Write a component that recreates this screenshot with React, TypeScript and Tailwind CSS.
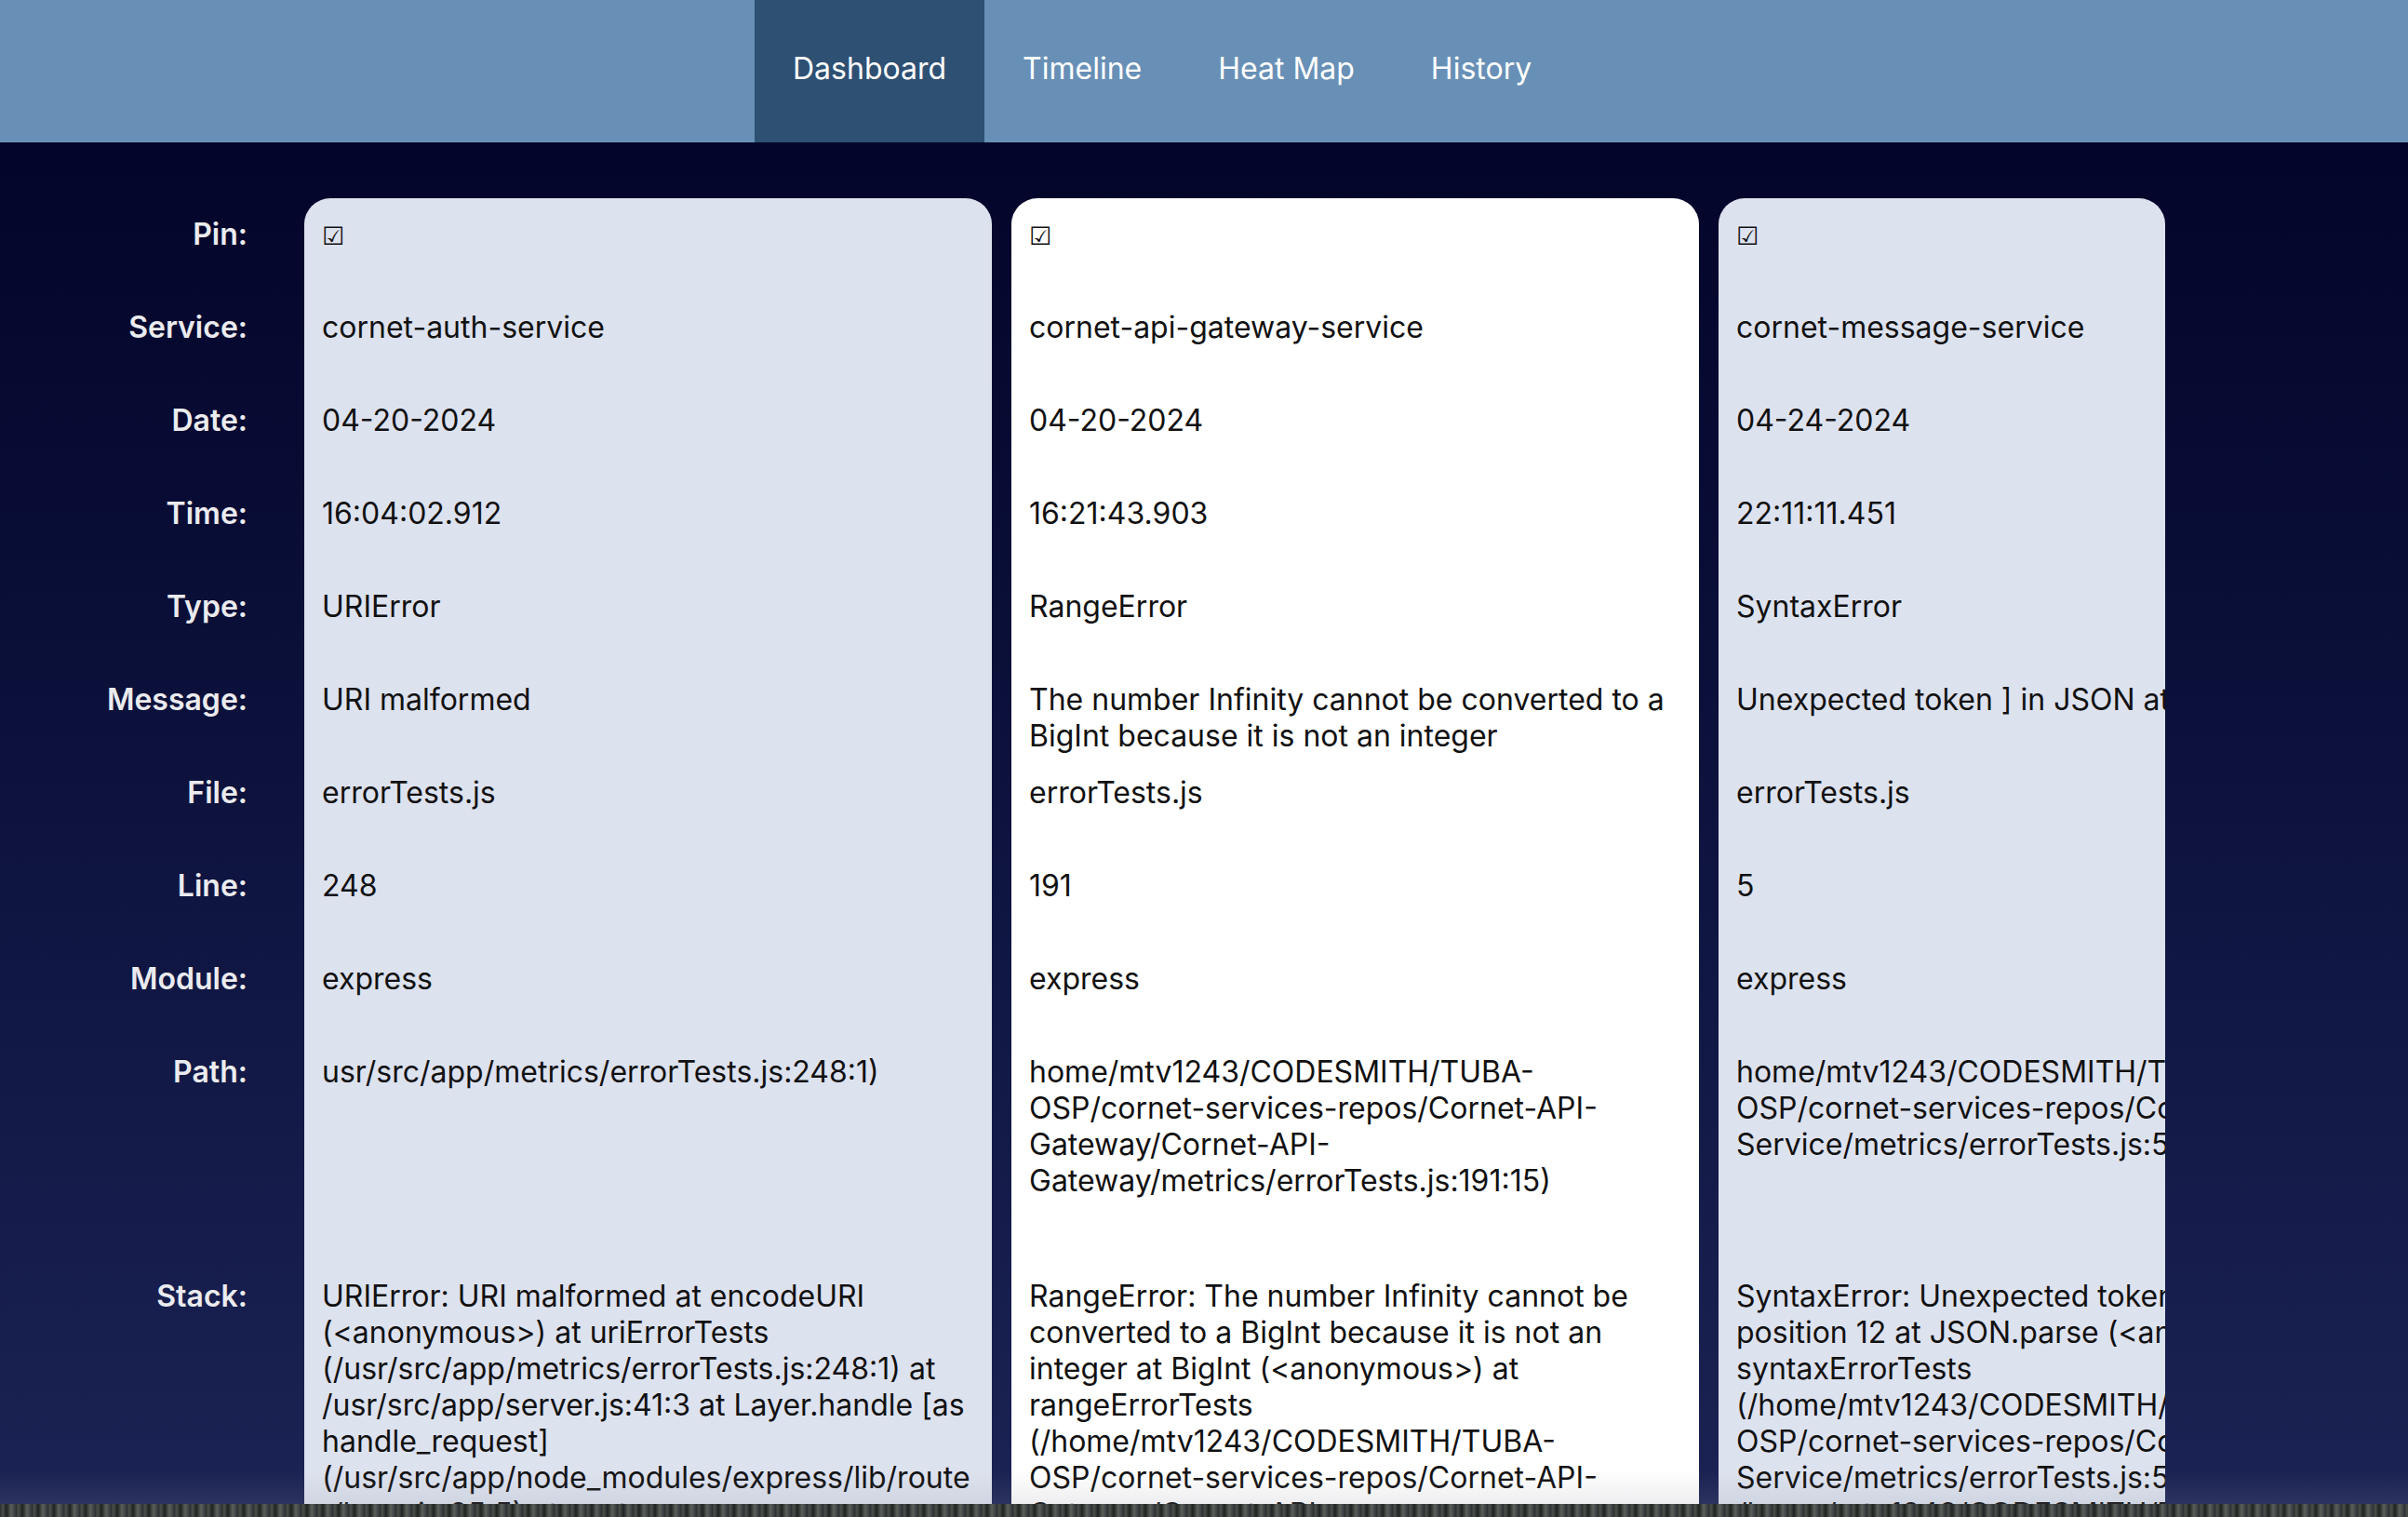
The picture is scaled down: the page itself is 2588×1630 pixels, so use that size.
import React from "react";

const tabs = ["Dashboard", "Timeline", "Heat Map", "History"];

const labels = [
  "Pin:",
  "Service:",
  "Date:",
  "Time:",
  "Type:",
  "Message:",
  "File:",
  "Line:",
  "Module:",
  "Path:",
  "Stack:",
];

type ErrorLog = {
  service: string;
  date: string;
  time: string;
  type: string;
  message: string;
  file: string;
  line: string;
  module: string;
  path: string;
  stack: string;
  highlight?: boolean;
  clipped?: boolean;
};

const logs: ErrorLog[] = [
  {
    service: "cornet-auth-service",
    date: "04-20-2024",
    time: "16:04:02.912",
    type: "URIError",
    message: "URI malformed",
    file: "errorTests.js",
    line: "248",
    module: "express",
    path: "usr/src/app/metrics/errorTests.js:248:1)",
    stack:
      "URIError: URI malformed at encodeURI (<anonymous>) at uriErrorTests (/usr/src/app/metrics/errorTests.js:248:1) at /usr/src/app/server.js:41:3 at Layer.handle [as handle_request] (/usr/src/app/node_modules/express/lib/router/layer.js:95:5) at next (/usr/src/app/node_modules/express/lib/router/route.js:149:13)",
  },
  {
    service: "cornet-api-gateway-service",
    date: "04-20-2024",
    time: "16:21:43.903",
    type: "RangeError",
    message: "The number Infinity cannot be converted to a BigInt because it is not an integer",
    file: "errorTests.js",
    line: "191",
    module: "express",
    path: "home/mtv1243/CODESMITH/TUBA-OSP/cornet-services-repos/Cornet-API-Gateway/Cornet-API-Gateway/metrics/errorTests.js:191:15)",
    stack:
      "RangeError: The number Infinity cannot be converted to a BigInt because it is not an integer at BigInt (<anonymous>) at rangeErrorTests (/home/mtv1243/CODESMITH/TUBA-OSP/cornet-services-repos/Cornet-API-Gateway/Cornet-API-Gateway/metrics/errorTests.js:191:15) at next",
    highlight: true,
  },
  {
    service: "cornet-message-service",
    date: "04-24-2024",
    time: "22:11:11.451",
    type: "SyntaxError",
    message: "Unexpected token ] in JSON at position 12",
    file: "errorTests.js",
    line: "5",
    module: "express",
    path: "home/mtv1243/CODESMITH/TUBA-OSP/cornet-services-repos/Cornet-Message-Service/metrics/errorTests.js:5:11)",
    stack:
      "SyntaxError: Unexpected token ] in JSON at position 12 at JSON.parse (<anonymous>) at syntaxErrorTests (/home/mtv1243/CODESMITH/TUBA-OSP/cornet-services-repos/Cornet-Message-Service/metrics/errorTests.js:5:11) at /home/mtv1243/CODESMITH/TUBA-OSP/cornet-services-repos/Cornet-Message-Service/server.js:30:3",
    clipped: true,
  },
];

function rowHeight(i: number) {
  if (i === 9) return "h-[241px]";
  if (i === 10) return "h-[400px]";
  return "h-[100px]";
}

function Card({ log }: { log: ErrorLog }) {
  const values = [
    log.service,
    log.date,
    log.time,
    log.type,
    log.message,
    log.file,
    log.line,
    log.module,
    log.path,
    log.stack,
  ];
  return (
    <div
      className={`shrink-0 overflow-hidden rounded-t-[28px] text-[#111111] ${
        log.clipped ? "w-[480px]" : "w-[739px]"
      } ${log.highlight ? "bg-white" : "bg-[#dde2ef]"}`}
    >
      <div className="w-[739px]">
        <div className="h-[100px] px-[19px] pt-[19px]">
          <span className="font-['DejaVu_Sans',sans-serif] text-[27px] leading-[39px]">☑</span>
        </div>
        {values.map((v, i) => (
          <div key={i} className={`${rowHeight(i + 1)} px-[19px] pt-[19px] break-words`}>
            {v}
          </div>
        ))}
      </div>
    </div>
  );
}

export default function App() {
  return (
    <div className="w-[2588px] h-[1630px] overflow-hidden flex flex-col font-['Inter',sans-serif] text-[32px] leading-[39px]">
      <header className="h-[153px] shrink-0 bg-[#6890b6] flex pl-[811px]">
        {tabs.map((t, i) => (
          <div
            key={t}
            className={`h-full flex items-center px-[41px] pb-[6px] text-white ${
              i === 0 ? "bg-[#2e5073]" : ""
            }`}
          >
            {t}
          </div>
        ))}
      </header>

      <main className="relative flex-1 overflow-hidden bg-gradient-to-b from-[#04052a] to-[#1b2354] flex pt-[60px]">
        <div className="w-[266px] shrink-0 text-right font-semibold text-[#ebebef]">
          {labels.map((l, i) => (
            <div key={l} className={`${rowHeight(i)} pt-[19px]`}>
              {l}
            </div>
          ))}
        </div>
        <div className="ml-[61px] flex gap-[21px]">
          {logs.map((log) => (
            <Card key={log.service} log={log} />
          ))}
        </div>
        <div className="absolute left-0 right-0 bottom-0 h-[36px] bg-gradient-to-b from-transparent to-[#8a8c9a]/15 pointer-events-none" />
      </main>

      <div className="h-[14px] shrink-0 bg-[repeating-linear-gradient(90deg,#2a2e2d_0px,#4b504c_3px,#1e2221_7px,#5c605b_12px,#33373a_17px)]" />
    </div>
  );
}
